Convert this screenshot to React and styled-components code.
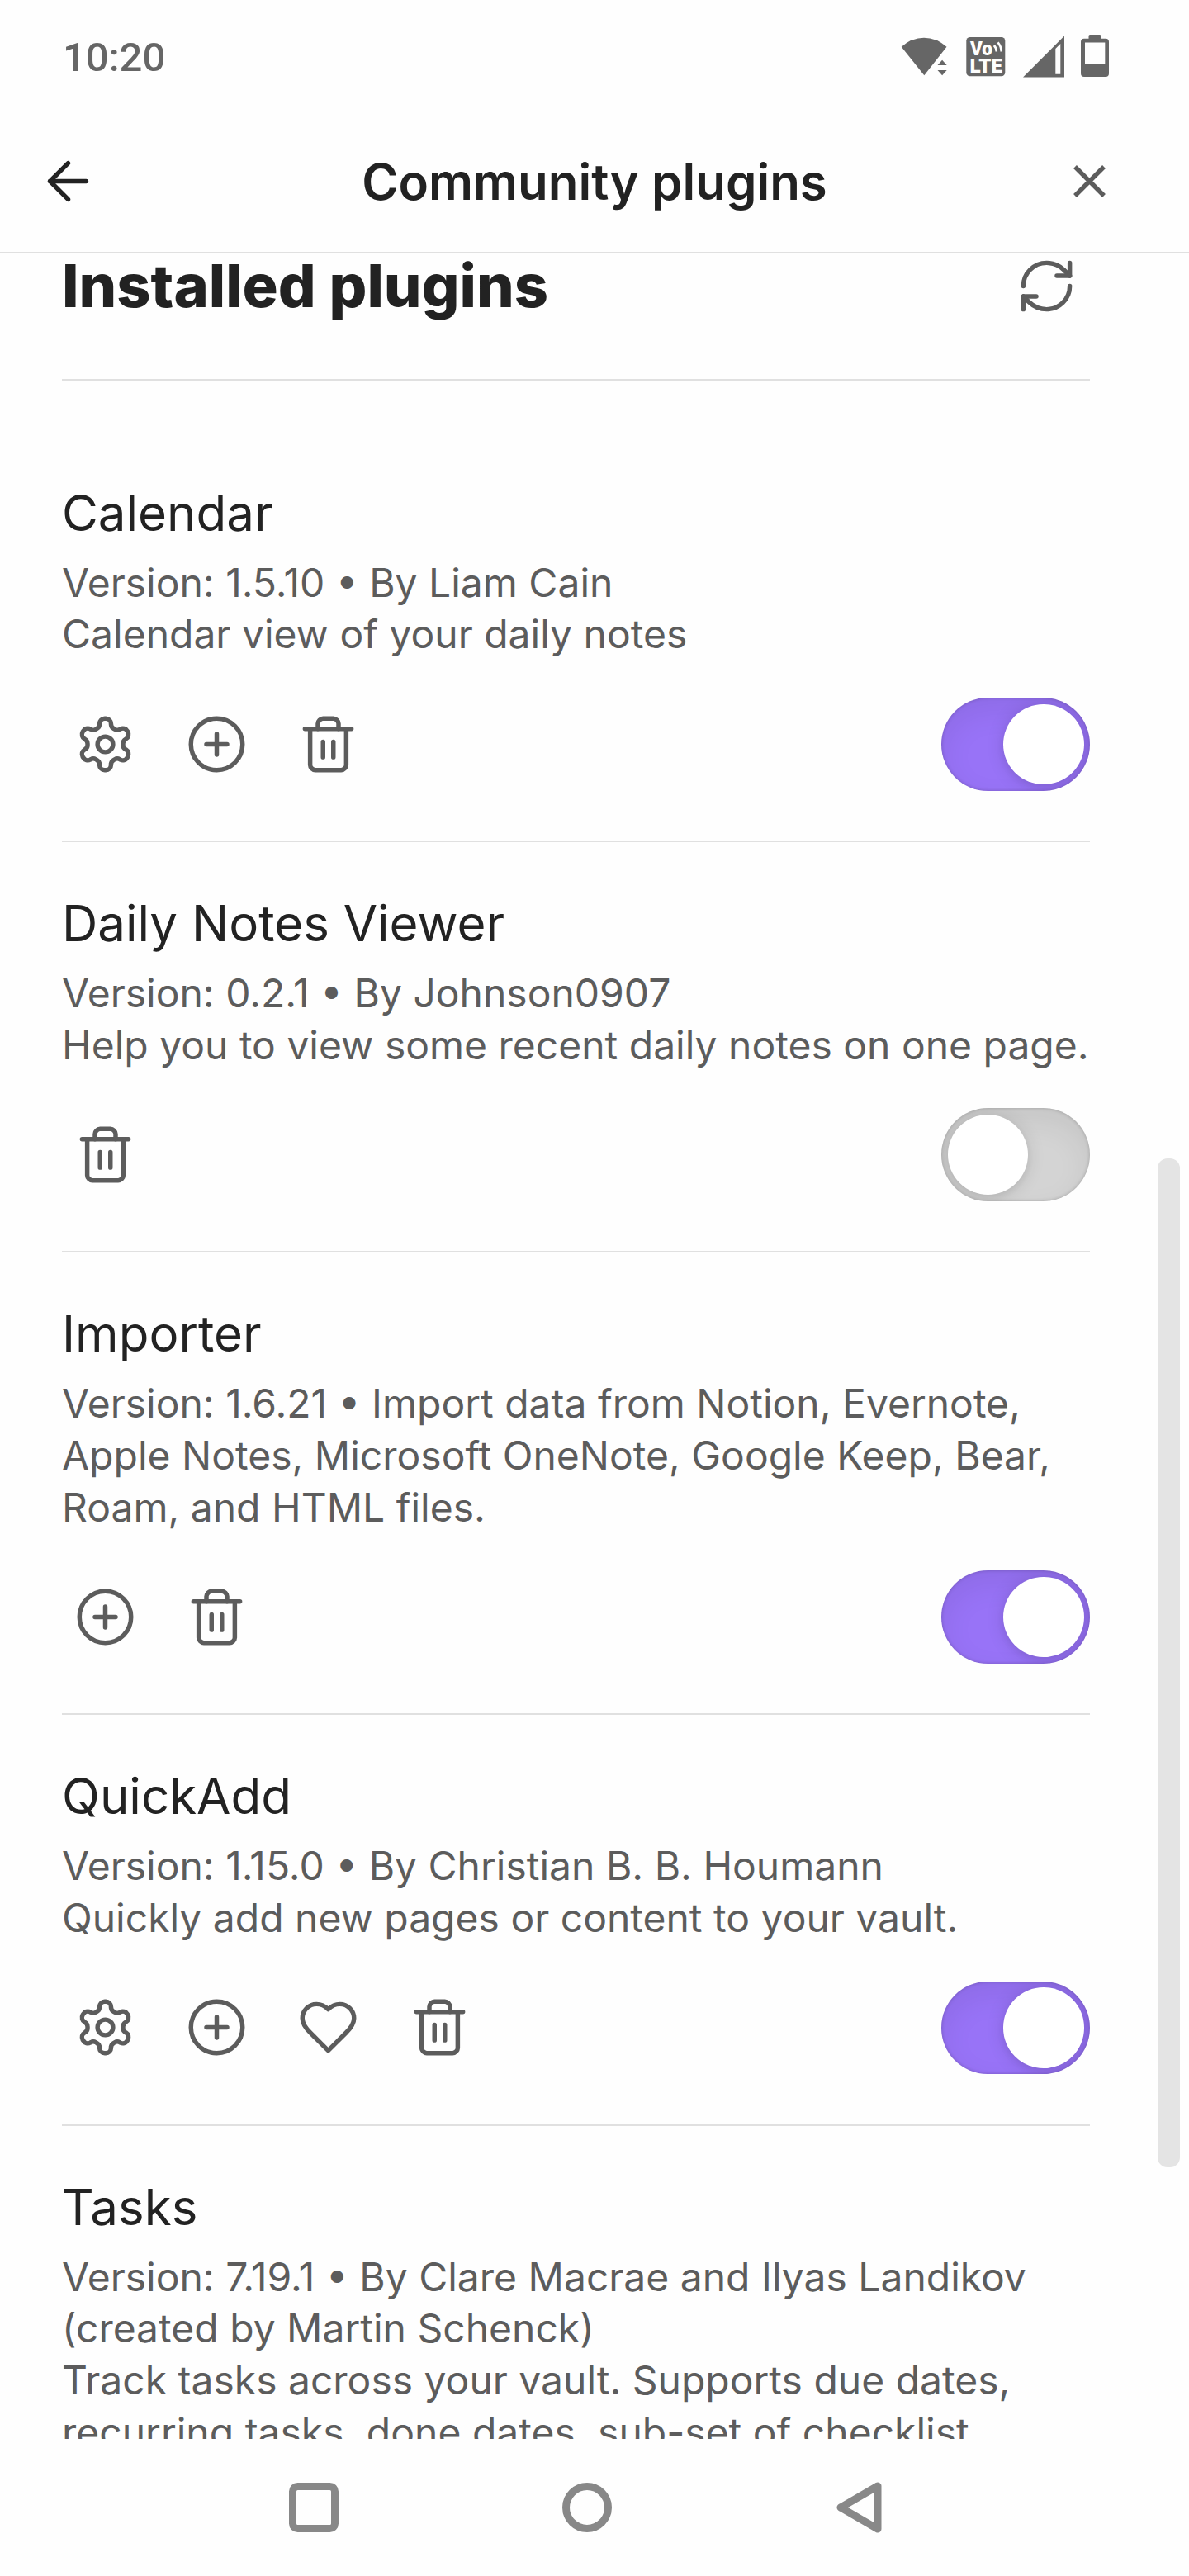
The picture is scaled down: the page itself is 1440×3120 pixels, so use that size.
import React, { useState } from "react";
import styled, { createGlobalStyle } from "styled-components";

const GlobalStyle = createGlobalStyle`
  * {
    box-sizing: border-box;
  }

  body {
    margin: 0;
    background: #fefefe;
    font-family: Inter, "Liberation Sans", sans-serif;
  }
`;

const Screen = styled.div`
  width: 1440px;
  height: 3120px;
  display: flex;
  flex-direction: column;
  overflow: hidden;
  background: #fefefe;
  color: #222222;
`;

const StatusBar = styled.div`
  flex: none;
  height: 136px;
  padding: 0 97px 0 76px;
  display: flex;
  align-items: center;
  justify-content: space-between;
  color: #666666;
`;

const Clock = styled.span`
  font-family: Roboto, "Liberation Sans", sans-serif;
  font-size: 49px;
  font-weight: 500;
  line-height: 60px;
  padding-top: 3px;
`;

const StatusIcons = styled.svg`
  display: block;
  width: 252px;
  height: 52px;
`;

const BadgeText = styled.text`
  fill: #fefefe;
  font-family: Roboto, "Liberation Sans", sans-serif;
  font-size: 23.5px;
  font-weight: 900;
`;

const Header = styled.header`
  flex: none;
  height: 171px;
  padding: 0 83px 2px 45px;
  display: flex;
  align-items: center;
  justify-content: space-between;
  border-bottom: 2px solid #e0e0e0;
`;

const HeaderButton = styled.button`
  width: 75px;
  height: 75px;
  padding: 0;
  border: 0;
  background: transparent;
  color: ${(props) => (props.$dark ? "#222222" : "#5c5c5c")};
`;

const Title = styled.h1`
  margin: 0;
  padding-left: 38px;
  font-size: 60px;
  font-weight: 600;
  line-height: 78px;
`;

const Body = styled.main`
  position: relative;
  flex: 1;
  min-height: 0;
  padding: 0 120px 0 75px;
  overflow: hidden;
`;

const ScrollThumb = styled.div`
  position: absolute;
  top: 1096px;
  right: 11px;
  width: 27px;
  height: 1222px;
  border-radius: 12px;
  background: #e4e4e4;
`;

const SectionHead = styled.div`
  height: 155px;
  padding: 2px 15px 0 0;
  display: flex;
  align-items: flex-start;
  justify-content: space-between;
  border-bottom: 3px solid #e0e0e0;
  margin-bottom: 60.67px;
`;

const SectionTitle = styled.h2`
  margin: -2px 0 0;
  font-size: 72px;
  font-weight: 800;
  line-height: 78px;
`;

const Plugin = styled.section`
  padding: 59px 0 60.5px;
  border-bottom: 2px solid #e0e0e0;
`;

const Name = styled.div`
  margin-bottom: 15px;
  font-size: 60px;
  line-height: 78px;
`;

const Description = styled.div`
  font-size: 48px;
  line-height: 62.67px;
  color: #5c5c5c;
  white-space: nowrap;
`;

const Controls = styled.div`
  height: 112.5px;
  margin-top: 45px;
  display: flex;
  align-items: center;
  justify-content: space-between;
`;

const Actions = styled.div`
  display: flex;
  gap: 30px;
`;

const ActionButton = styled.button`
  width: 105px;
  height: 105px;
  padding: 15px;
  border: 0;
  background: transparent;
  color: #5c5c5c;
`;

const IconSvg = styled.svg`
  display: block;
  width: 75px;
  height: 75px;
  fill: none;
  stroke: currentColor;
  stroke-width: 1.75;
  stroke-linecap: round;
  stroke-linejoin: round;
`;

const Track = styled.button`
  width: 180px;
  height: 112.5px;
  padding: 7.5px;
  display: flex;
  justify-content: ${(props) => (props.$on ? "flex-end" : "flex-start")};
  border: 0;
  border-radius: 57px;
  overflow: hidden;
  background: ${(props) => (props.$on ? "#9873f7" : "#d4d4d4")};
  box-shadow: inset 0 15px 37px rgba(0, 0, 0, 0.07),
    inset 0 0 4px rgba(0, 0, 0, 0.21);
`;

const Knob = styled.span`
  width: 97.5px;
  height: 97.5px;
  border-radius: 50%;
  background: #ffffff;
  box-shadow: 0 4px 8px rgba(0, 0, 0, 0.06), 0 2px 22px rgba(0, 0, 0, 0.12);
`;

const NavBar = styled.nav`
  flex: none;
  height: 166px;
  padding: 0 364px 0 345px;
  display: flex;
  align-items: center;
  justify-content: space-between;
  color: #888888;
`;

const NavIcon = styled.svg`
  display: block;
  width: 70px;
  height: 70px;
  fill: none;
  stroke: currentColor;
  stroke-width: 9;
  stroke-linejoin: round;
`;

const icons = {
  back: (
    <>
      <path d="m12 19-7-7 7-7" />
      <path d="M19 12H5" />
    </>
  ),
  close: (
    <path d="M17.6 6.4 6.4 17.6M6.4 6.4l11.2 11.2" strokeLinecap="butt" />
  ),
  refresh: (
    <>
      <path d="M3 12a9 9 0 0 1 9-9 9.75 9.75 0 0 1 6.74 2.74L21 8" />
      <path d="M21 3v5h-5" />
      <path d="M21 12a9 9 0 0 1-9 9 9.75 9.75 0 0 1-6.74-2.74L3 16" />
      <path d="M8 16H3v5" />
    </>
  ),
  settings: (
    <>
      <path d="M12.22 2h-.44a2 2 0 0 0-2 2v.18a2 2 0 0 1-1 1.73l-.43.25a2 2 0 0 1-2 0l-.15-.08a2 2 0 0 0-2.73.73l-.22.38a2 2 0 0 0 .73 2.73l.15.1a2 2 0 0 1 1 1.72v.51a2 2 0 0 1-1 1.74l-.15.09a2 2 0 0 0-.73 2.73l.22.38a2 2 0 0 0 2.73.73l.15-.08a2 2 0 0 1 2 0l.43.25a2 2 0 0 1 1 1.73V20a2 2 0 0 0 2 2h.44a2 2 0 0 0 2-2v-.18a2 2 0 0 1 1-1.73l.43-.25a2 2 0 0 1 2 0l.15.08a2 2 0 0 0 2.73-.73l.22-.39a2 2 0 0 0-.73-2.73l-.15-.08a2 2 0 0 1-1-1.74v-.5a2 2 0 0 1 1-1.74l.15-.09a2 2 0 0 0 .73-2.73l-.22-.38a2 2 0 0 0-2.73-.73l-.15.08a2 2 0 0 1-2 0l-.43-.25a2 2 0 0 1-1-1.73V4a2 2 0 0 0-2-2z" />
      <circle cx="12" cy="12" r="3" />
    </>
  ),
  add: (
    <>
      <circle cx="12" cy="12" r="10" />
      <path d="M8 12h8M12 8v8" />
    </>
  ),
  heart: (
    <path d="M19 14c1.49-1.46 3-3.21 3-5.5A5.5 5.5 0 0 0 16.5 3c-1.76 0-3 .5-4.5 2-1.5-1.5-2.74-2-4.5-2A5.5 5.5 0 0 0 2 8.500c0 2.3 1.5 4.05 3 5.5l7 7Z" />
  ),
  trash: (
    <>
      <path d="M3 6h18" />
      <path d="M19 6v14c0 1-1 2-2 2H7c-1 0-2-1-2-2V6" />
      <path d="M8 6V4c0-1 1-2 2-2h4c1 0 2 1 2 2v2" />
      <path d="M10 11v6M14 11v6" />
    </>
  ),
};

const plugins = [
  {
    name: "Calendar",
    lines: [
      "Version: 1.5.10 • By Liam Cain",
      "Calendar view of your daily notes",
    ],
    actions: ["settings", "add", "trash"],
    enabled: true,
  },
  {
    name: "Daily Notes Viewer",
    lines: [
      "Version: 0.2.1 • By Johnson0907",
      "Help you to view some recent daily notes on one page.",
    ],
    actions: ["trash"],
    enabled: false,
  },
  {
    name: "Importer",
    lines: [
      "Version: 1.6.21 • Import data from Notion, Evernote,",
      "Apple Notes, Microsoft OneNote, Google Keep, Bear,",
      "Roam, and HTML files.",
    ],
    actions: ["add", "trash"],
    enabled: true,
  },
  {
    name: "QuickAdd",
    lines: [
      "Version: 1.15.0 • By Christian B. B. Houmann",
      "Quickly add new pages or content to your vault.",
    ],
    actions: ["settings", "add", "heart", "trash"],
    enabled: true,
  },
  {
    name: "Tasks",
    lines: [
      "Version: 7.19.1 • By Clare Macrae and Ilyas Landikov",
      "(created by Martin Schenck)",
      "Track tasks across your vault. Supports due dates,",
      "recurring tasks, done dates, sub-set of checklist",
    ],
    actions: ["settings", "add", "trash"],
    enabled: true,
  },
];

function Icon({ name }) {
  return <IconSvg viewBox="0 0 24 24">{icons[name]}</IconSvg>;
}

function Toggle({ initial }) {
  const [on, setOn] = useState(initial);

  return (
    <Track $on={on} role="switch" aria-checked={on} onClick={() => setOn(!on)}>
      <Knob />
    </Track>
  );
}

function PluginItem({ plugin }) {
  return (
    <Plugin>
      <Name>{plugin.name}</Name>
      {plugin.lines.map((line) => (
        <Description key={line}>{line}</Description>
      ))}
      <Controls>
        <Actions>
          {plugin.actions.map((action) => (
            <ActionButton key={action} aria-label={action}>
              <Icon name={action} />
            </ActionButton>
          ))}
        </Actions>
        <Toggle initial={plugin.enabled} />
      </Controls>
    </Plugin>
  );
}

function App() {
  return (
    <>
      <GlobalStyle />
      <Screen>
        <StatusBar>
          <Clock>10:20</Clock>
          <StatusIcons viewBox="0 0 252 52" fill="currentColor">
            {/* wifi */}
            <path d="M.7 14.7Q13 3.7 28 3.7T55.500 14.7L28.300 49.200Z" />
            <path d="M44.500 37l5.600-6.200 5.600 6.200zM44.500 43h11.200l-5.600 6.200z" />
            {/* volte */}
            <rect x="79.300" y="3" width="47" height="47.300" rx="4.500" />
            <BadgeText
              x="84"
              y="24.700"
              textLength="27"
              lengthAdjust="spacingAndGlyphs"
            >
              Vo
            </BadgeText>
            <BadgeText
              x="83.500"
              y="45.700"
              textLength="39.500"
              lengthAdjust="spacingAndGlyphs"
            >
              LTE
            </BadgeText>
            <path
              d="M112.800 13q3 3 3 7.500M117.500 9.300q4 4.500 4.200 11.200"
              fill="none"
              stroke="#fefefe"
              strokeWidth="2.600"
            />
            {/* signal */}
            <path
              fillRule="evenodd"
              d="M148 51.500L198 1.500V51.500ZM187.300 47.700h6V11l-6 6Z"
            />
            {/* battery */}
            <path
              fillRule="evenodd"
              d="M229 0h12q1.500 0 1.500 1.500V4.700h5.500q4 0 4 4v38.300q0 4-4 4h-26q-4 0-4-4V8.700q0-4 4-4h5.500V1.500q0-1.500 1.500-1.500ZM223 9.500v26h24.300V9.500Z"
            />
          </StatusIcons>
        </StatusBar>

        <Header>
          <HeaderButton $dark aria-label="Back">
            <Icon name="back" />
          </HeaderButton>
          <Title>Community plugins</Title>
          <HeaderButton aria-label="Close">
            <Icon name="close" />
          </HeaderButton>
        </Header>

        <Body>
          <SectionHead>
            <SectionTitle>Installed plugins</SectionTitle>
            <HeaderButton aria-label="Check for updates">
              <Icon name="refresh" />
            </HeaderButton>
          </SectionHead>
          {plugins.map((plugin) => (
            <PluginItem key={plugin.name} plugin={plugin} />
          ))}
          <ScrollThumb />
        </Body>

        <NavBar>
          <NavIcon viewBox="0 0 70 70">
            <rect x="9.500" y="9.500" width="51" height="51" rx="6" />
          </NavIcon>
          <NavIcon viewBox="0 0 70 70">
            <circle cx="35" cy="35" r="25.500" />
          </NavIcon>
          <NavIcon viewBox="0 0 70 70">
            <path d="M12 35L57 9V61Z" />
          </NavIcon>
        </NavBar>
      </Screen>
    </>
  );
}

export default App;
